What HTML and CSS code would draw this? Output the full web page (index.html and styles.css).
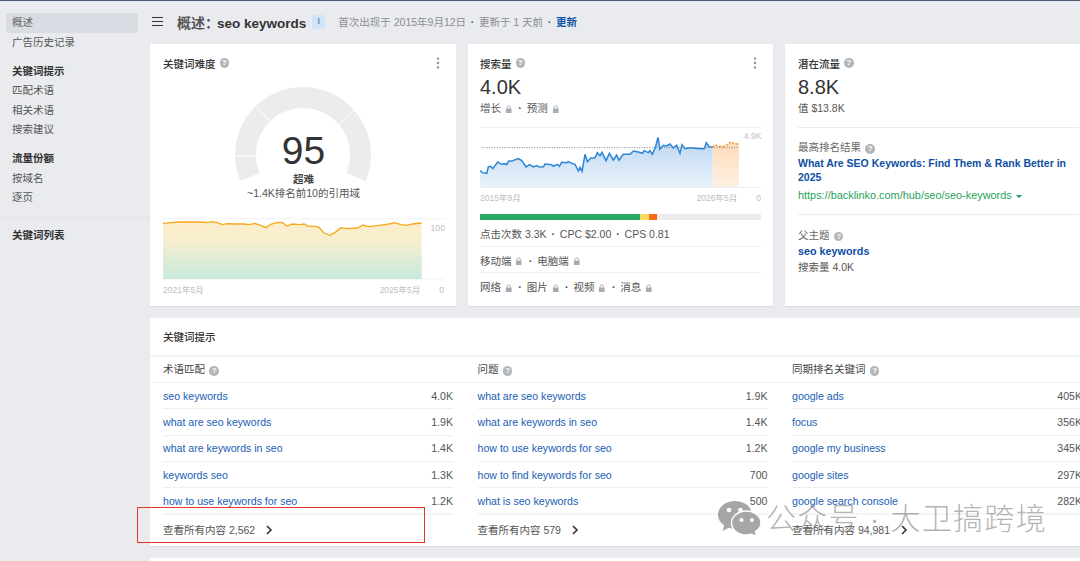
FILE: index.html
```html
<!DOCTYPE html>
<html lang="zh">
<head>
<meta charset="utf-8">
<title>概述：seo keywords</title>
<link rel="stylesheet" href="styles.css">
</head>
<body>
<svg class="defs" width="0" height="0" aria-hidden="true">
  <symbol id="lock" viewBox="0 0 8 9"><path d="M2.2 4V2.7a1.8 1.8 0 0 1 3.6 0V4" fill="none" stroke="currentColor" stroke-width="1"/><rect x="1" y="3.8" width="6" height="4.7" rx=".6" fill="currentColor"/></symbol>
  <symbol id="chev" viewBox="0 0 8 10"><path d="M2 1l4 4-4 4" fill="none" stroke="currentColor" stroke-width="1.6"/></symbol>
  <symbol id="dots" viewBox="0 0 4 12"><circle cx="2" cy="1.6" r="1.2"/><circle cx="2" cy="6" r="1.2"/><circle cx="2" cy="10.4" r="1.2"/></symbol>
</svg>
<div class="page">
  <aside class="sidebar">
    <nav class="nav-top">
      <a class="nav-item active">概述</a>
      <a class="nav-item">广告历史记录</a>
      <h4 class="nav-head">关键词提示</h4>
      <a class="nav-item">匹配术语</a>
      <a class="nav-item">相关术语</a>
      <a class="nav-item">搜索建议</a>
      <h4 class="nav-head">流量份额</h4>
      <a class="nav-item">按域名</a>
      <a class="nav-item">逐页</a>
    </nav>
    <nav class="nav-bottom">
      <h4 class="nav-head first">关键词列表</h4>
    </nav>
  </aside>
  <main class="main">
    <header class="topbar">
      <span class="burger"><i></i><i></i><i></i></span>
      <h1 class="page-title">概述：<b>seo keywords</b></h1>
      <span class="badge">I</span>
      <p class="updated">首次出现于 2015年9月12日 <b>·</b> 更新于 1 天前 <b>·</b> <a>更新</a></p>
    </header>

    <section class="cards">
      <article class="card kd">
        <div class="card-title"><span>关键词难度</span><span class="help">?</span><svg class="more"><use href="#dots"/></svg></div>
        <div class="gauge">
          <svg class="gauge-arc" viewBox="0 0 140 100" width="140" height="100">
            <path d="M16.9 90A57.5 57.5 0 1 1 123.1 90" fill="none" stroke="#ebecee" stroke-width="21"/>
            <path d="M0 69H24M23 20L38 35M122 23L105 38" stroke="#fff" stroke-width="1" fill="none"/>
          </svg>
          <div class="gauge-num">95</div>
          <div class="gauge-label">超难</div>
          <div class="gauge-sub">~1.4K排名前10的引用域</div>
        </div>
        <svg class="chart kd-chart" viewBox="37 385 845 190" width="282" height="63.4">
          <defs><linearGradient id="kdg" x1="0" y1="0" x2="0" y2="1"><stop offset="0" stop-color="#fdeecb"/><stop offset=".35" stop-color="#f6eecf"/><stop offset="1" stop-color="#c6e9dc"/></linearGradient></defs>
          <path d="M37 387H882M37 568H882" stroke="#f1f2f3" stroke-width="3"/>
          <polygon fill="url(#kdg)" points="37,401 60,399 85,397 150,397 165,399 185,396 200,399 215,405 230,402 250,403 280,403 295,405 312,401 330,407 345,414 362,403 380,398 395,399 408,409 425,403 445,405 460,403 472,410 495,410 505,414 520,430 537,437 553,428 570,414 590,417 620,415 636,406 650,411 680,408 700,405 715,403 732,399 750,405 768,407 785,403 812,400 812,568 37,568"/>
          <polyline fill="none" stroke="#f7a81b" stroke-width="4" points="37,401 60,399 85,397 150,397 165,399 185,396 200,399 215,405 230,402 250,403 280,403 295,405 312,401 330,407 345,414 362,403 380,398 395,399 408,409 425,403 445,405 460,403 472,410 495,410 505,414 520,430 537,437 553,428 570,414 590,417 620,415 636,406 650,411 680,408 700,405 715,403 732,399 750,405 768,407 785,403 812,400"/>
          <text x="882" y="425" text-anchor="end" class="axis-svg">100</text>
        </svg>
        <div class="axis kd-axis"><span>2021年5月</span><span class="axis-end">2025年5月</span><span class="axis-zero">0</span></div>
      </article>

      <article class="card volume">
        <div class="card-title"><span>搜索量</span><span class="help">?</span><svg class="more"><use href="#dots"/></svg></div>
        <div class="big">4.0K</div>
        <div class="meta">增长 <svg class="lock"><use href="#lock"/></svg> <b>·</b> 预测 <svg class="lock"><use href="#lock"/></svg></div>
        <svg class="chart vol-chart" viewBox="30 21 845 184" width="281.7" height="61.3">
          <defs>
            <linearGradient id="volg" x1="0" y1="0" x2="0" y2="1"><stop offset="0" stop-color="#bcd6f1"/><stop offset="1" stop-color="#e9f2fb"/></linearGradient>
            <linearGradient id="ong" x1="0" y1="0" x2="0" y2="1"><stop offset="0" stop-color="#fddcb9"/><stop offset="1" stop-color="#fdf0e3"/></linearGradient>
          </defs>
          <path d="M30 22H875M30 203H875" stroke="#e9ebee" stroke-width="3"/>
          <polygon fill="url(#ong)" points="728,81 735,75 750,79 765,79 782,66 790,70 800,72 807,68 807,201 728,201"/>
          <polygon fill="url(#volg)" points="30,152 37,158 50,160 55,140 62,139 68,146 83,126 95,133 105,131 110,134 115,124 128,122 145,116 155,122 168,141 178,134 190,141 200,137 207,141 220,140 225,132 245,134 250,139 262,133 268,139 275,127 290,128 295,125 305,130 315,133 325,153 330,142 336,154 345,103 352,125 362,114 375,113 382,98 390,107 396,97 408,122 418,100 430,120 440,105 447,121 460,103 480,103 490,93 505,96 518,100 522,92 535,98 540,92 547,103 557,80 564,52 570,88 580,76 590,78 600,72 610,84 620,76 630,100 636,74 645,86 660,83 690,86 703,86 709,68 717,80 728,81 728,201 30,201"/>
          <path d="M35 83H807" stroke="#7f7f7f" stroke-width="3" stroke-dasharray="3 4.5" fill="none"/>
          <polyline fill="none" stroke="#2f86d6" stroke-width="4.6" points="30,152 37,158 50,160 55,140 62,139 68,146 83,126 95,133 105,131 110,134 115,124 128,122 145,116 155,122 168,141 178,134 190,141 200,137 207,141 220,140 225,132 245,134 250,139 262,133 268,139 275,127 290,128 295,125 305,130 315,133 325,153 330,142 336,154 345,103 352,125 362,114 375,113 382,98 390,107 396,97 408,122 418,100 430,120 440,105 447,121 460,103 480,103 490,93 505,96 518,100 522,92 535,98 540,92 547,103 557,80 564,52 570,88 580,76 590,78 600,72 610,84 620,76 630,100 636,74 645,86 660,83 690,86 703,86 709,68 717,80 728,81"/>
          <polyline fill="none" stroke="#f78d1e" stroke-width="4.4" stroke-dasharray="6 5" points="728,81 735,75 750,79 765,79 782,66 790,70 800,72 807,68"/>
          <text x="875" y="56" text-anchor="end" class="axis-svg">4.9K</text>
        </svg>
        <div class="axis vol-axis"><span>2015年9月</span><span class="axis-end">2026年5月</span><span class="axis-zero">0</span></div>
        <div class="stack-bar"><i class="seg-green"></i><i class="seg-yellow"></i><i class="seg-orange"></i></div>
        <div class="stat-row">点击次数 3.3K <b>·</b> CPC $2.00 <b>·</b> CPS 0.81</div>
        <div class="stat-row">移动端 <svg class="lock"><use href="#lock"/></svg> <b>·</b> 电脑端 <svg class="lock"><use href="#lock"/></svg></div>
        <div class="stat-row last">网络 <svg class="lock"><use href="#lock"/></svg> <b>·</b> 图片 <svg class="lock"><use href="#lock"/></svg> <b>·</b> 视频 <svg class="lock"><use href="#lock"/></svg> <b>·</b> 消息 <svg class="lock"><use href="#lock"/></svg></div>
      </article>

      <article class="card traffic">
        <div class="card-title"><span>潜在流量</span><span class="help">?</span></div>
        <div class="big">8.8K</div>
        <div class="meta">值 $13.8K</div>
        <div class="block top-result">
          <div class="block-label">最高排名结果 <span class="help">?</span></div>
          <a class="strong-link">What Are SEO Keywords: Find Them &amp; Rank Better in 2025</a>
          <div class="url">https://backlinko.com/hub/seo/seo-keywords <i class="caret"></i></div>
        </div>
        <div class="block parent">
          <div class="block-label">父主题 <span class="help">?</span></div>
          <a class="strong-link one">seo keywords</a>
          <div class="meta tight">搜索量 4.0K</div>
        </div>
      </article>
    </section>

    <section class="card ideas">
      <h2 class="ideas-title">关键词提示</h2>
      <div class="ideas-cols">
        <div class="col">
          <div class="col-head">术语匹配 <span class="help">?</span></div>
          <ul class="rows">
            <li><a>seo keywords</a><span>4.0K</span></li>
            <li><a>what are seo keywords</a><span>1.9K</span></li>
            <li><a>what are keywords in seo</a><span>1.4K</span></li>
            <li><a>keywords seo</a><span>1.3K</span></li>
            <li><a>how to use keywords for seo</a><span>1.2K</span></li>
          </ul>
          <div class="col-foot">查看所有内容 2,562 <svg class="chev"><use href="#chev"/></svg></div>
        </div>
        <div class="col">
          <div class="col-head">问题 <span class="help">?</span></div>
          <ul class="rows">
            <li><a>what are seo keywords</a><span>1.9K</span></li>
            <li><a>what are keywords in seo</a><span>1.4K</span></li>
            <li><a>how to use keywords for seo</a><span>1.2K</span></li>
            <li><a>how to find keywords for seo</a><span>700</span></li>
            <li><a>what is seo keywords</a><span>500</span></li>
          </ul>
          <div class="col-foot">查看所有内容 579 <svg class="chev"><use href="#chev"/></svg></div>
        </div>
        <div class="col">
          <div class="col-head">同期排名关键词 <span class="help">?</span></div>
          <ul class="rows">
            <li><a>google ads</a><span>405K</span></li>
            <li><a>focus</a><span>356K</span></li>
            <li><a>google my business</a><span>345K</span></li>
            <li><a>google sites</a><span>297K</span></li>
            <li><a>google search console</a><span>282K</span></li>
          </ul>
          <div class="col-foot">查看所有内容 94,981 <svg class="chev"><use href="#chev"/></svg></div>
        </div>
      </div>
    </section>
    <section class="card next-card"></section>
  </main>

  <div class="red-box"></div>
  <div class="watermark">
    <svg class="wechat" viewBox="0 0 44 36" width="44" height="36">
      <path d="M18 1C8.6 1 1 7.2 1 14.8c0 4.3 2.4 8 6.2 10.6L5.5 31l6.3-3.2c2 .6 4 .9 6.2.9 9.4 0 17-6.2 17-13.9S27.400 1 18 1z" fill="#a6a6a6"/>
      <path d="M29.500 11C21 11 14.500 16.400 14.500 23s6.500 12 15 12c1.700 0 3.400-.2 5-.7l5.300 2.200-1.300-4.800c3.400-2.200 5.500-5.300 5.500-8.700 0-6.600-6.500-12-14.500-12z" fill="#a6a6a6" stroke="#fff" stroke-width="1.500"/>
      <circle cx="12" cy="10" r="2.300" fill="#fff"/><circle cx="23.500" cy="10" r="2.300" fill="#fff"/>
      <circle cx="24.500" cy="20" r="2" fill="#fff"/><circle cx="35" cy="20" r="2" fill="#fff"/>
    </svg>
    <span class="wm-text">公众号 · 大卫搞跨境</span>
  </div>
</div>
</body>
</html>
```
FILE: styles.css
```css
* { box-sizing: border-box; }
html, body { margin: 0; padding: 0; height: 100%; }
body {
  width: 1080px;
  height: 561px;
  overflow: hidden;
  background: #e9ebee;
  font-family: "Liberation Sans", "Noto Sans CJK SC", sans-serif;
  font-size: 10.5px;
  color: #444;
}
.defs { position: absolute; }
.page {
  position: relative;
  display: flex;
  width: 1080px;
  height: 561px;
  overflow: hidden;
  border-top: 1px solid #4c5a74;
}
.sidebar { flex: 0 0 150px; padding-top: 12px; }
.nav-item, .nav-head {
  display: block;
  height: 19.5px;
  line-height: 19.5px;
  margin: 0 12px 0 6px;
  padding-left: 6px;
  font-size: 10.5px;
  color: #555;
  font-weight: 400;
}
.nav-item.active { background: #d9dce2; border-radius: 2px; color: #666; }
.nav-head { margin-top: 9.5px; font-weight: 700; color: #333; }
.nav-bottom { margin-top: 9.5px; border-top: 1px solid #e0e2e6; padding-top: 8px; }
.nav-head.first { margin-top: 0; }

.main { flex: 0 0 942px; }
.topbar { display: flex; align-items: center; height: 43px; padding: 0 0 2px 2px; }
.burger { display: flex; flex-direction: column; gap: 2.5px; width: 11px; margin-right: 14px; }
.burger i { display: block; height: 1.5px; background: #333; }
.page-title { margin: 0; font-size: 14px; font-weight: 700; color: #555; }
.page-title b { color: #333; font-weight: 700; font-size: 13.5px; margin-left: -2px; }
.badge {
  width: 13px; height: 14px; margin-left: 6px;
  background: #cfe4f8; border-radius: 2px;
  color: #6f8fb3; font-size: 9px; font-weight: 700;
  text-align: center; line-height: 13px;
}
.updated { margin: 0 0 0 13px; color: #8b8e93; font-size: 10.5px; }
.updated b { color: #555; margin: 0 1.75px; }
.updated a { color: #0f55a8; font-weight: 700; }

.cards { display: grid; grid-template-columns: 306px 305px 307px; gap: 12px; height: 262px; }
.card { background: #fff; box-shadow: 0 1px 1px rgba(0,0,0,.06); }
.kd { padding: 12px 12px 0 13px; }
.volume { padding: 12px 12px 0; }
.traffic { padding: 12px 13px 0; }
.card-title { display: flex; align-items: center; height: 14px; font-size: 10.5px; color: #333; font-weight: 500; }
.help {
  display: inline-block; width: 9.5px; height: 9.5px; margin-left: 4px;
  border-radius: 50%; background: #b3b5b8; color: #fff;
  font-size: 7.5px; font-weight: 700; line-height: 9.5px; text-align: center;
}
.block-label .help, .col-head .help { margin-left: 1.5px; }
.more { width: 4px; height: 12px; margin-left: auto; margin-right: 4.5px; fill: #8d8f92; }

.gauge { position: relative; height: 112px; margin-top: 17px; text-align: center; padding-top: 44px; }
.gauge-arc { position: absolute; left: 70px; top: 0; }
.gauge-num { position: relative; top: 1px; font-size: 39px; line-height: 38px; color: #333; }
.gauge-label { position: relative; margin-top: 3px; line-height: 14px; font-weight: 700; color: #444; font-size: 10.5px; }
.gauge-sub { position: relative; top: -.5px; line-height: 14px; color: #555; font-size: 10.5px; }
.chart { display: block; }
.kd-chart { margin-top: 19px; }
.axis-svg { font-size: 26px; fill: #bfc1c4; }
.axis { display: flex; font-size: 8.5px; color: #bcbec1; line-height: 12px; }
.kd-axis { margin-top: 3px; }
.vol-axis { margin-top: 4px; }
.axis-end { margin-left: auto; }
.axis-zero { margin-left: 19px; }

.big { margin-top: 5px; font-size: 20px; line-height: 24px; color: #333; }
.meta { margin-top: 2px; line-height: 14px; font-size: 10.5px; color: #555; }
.meta b, .stat-row b { margin: 0 2px; color: #444; }
.lock { width: 7.5px; height: 8.5px; color: #a9abae; vertical-align: -1px; margin: 0 1px; }
.vol-chart { margin-top: 11.5px; }
.stack-bar { display: flex; height: 6.5px; margin-top: 10px; background: #ececee; }
.stack-bar i { display: block; height: 100%; }
.seg-green { width: 160px; background: #2aa865; }
.seg-yellow { width: 9px; background: #fbd960; }
.seg-orange { width: 8px; background: #fb6a16; }
.stat-row { height: 26.6px; line-height: 28.5px; border-bottom: 1px solid #eeeff1; color: #555; font-size: 10.5px; }
.stat-row:first-of-type { line-height: 29px; }
.stat-row.last { border-bottom: 0; }

.block { margin-top: 12px; border-top: 1px solid #e9ebee; }
.top-result { padding: 12px 0 12px; }
.parent { margin-top: 0; padding-top: 12.5px; }
.block-label { line-height: 14px; color: #666; font-size: 10.5px; }
.strong-link { display: block; margin-top: 2px; line-height: 14px; font-weight: 700; color: #0f4fa3; font-size: 10.5px; }
.strong-link.one { margin-top: 2px; font-size: 10.8px; }
.url { margin-top: 4px; line-height: 14px; color: #27a35c; font-size: 10.9px; }
.caret { display: inline-block; margin-left: 1px; border: 3px solid transparent; border-top: 3.5px solid #1f9a55; border-bottom: 0; vertical-align: 1px; }

.ideas { width: 942px; height: 228px; margin-top: 12px; }
.ideas-title { margin: 0; height: 39px; padding-left: 13px; line-height: 38px; font-size: 10.5px; font-weight: 500; color: #333; border-bottom: 2px solid #f2f3f4; }
.ideas-cols { display: grid; grid-template-columns: repeat(3, 290px); column-gap: 24.5px; padding-left: 13px; position: relative; }
.col-head { height: 26px; line-height: 25px; margin-right: -24.5px; margin-left: -13px; padding-left: 13px; font-size: 10.5px; color: #444; border-bottom: 1px solid #eeeff1; }
.rows { margin: 0; padding: 0; list-style: none; }
.rows li { display: flex; justify-content: space-between; align-items: center; height: 26.3px; border-bottom: 1px solid #eeeff1; font-size: 10.6px; }
.rows li:last-child { height: 27.3px; border-bottom: 2px solid #f3f4f5; }
.rows a { color: #2060b5; }
.rows span { color: #555; }
.col-foot { display: flex; align-items: center; height: 29px; font-size: 10.5px; color: #555; }
.chev { width: 8px; height: 10px; margin-left: 10px; color: #333; }
.next-card { width: 942px; height: 20px; margin-top: 12px; }

.red-box { position: absolute; left: 137px; top: 506px; width: 288px; height: 36px; border: 1px solid #e9332b; }
.watermark { position: absolute; left: 717px; top: 497px; display: flex; align-items: center; gap: 5px; }
.wm-text { margin-top: 3px; font-size: 30px; line-height: 36px; color: rgba(120,122,124,.58); letter-spacing: 1.3px; font-weight: 300; white-space: nowrap; }
```
